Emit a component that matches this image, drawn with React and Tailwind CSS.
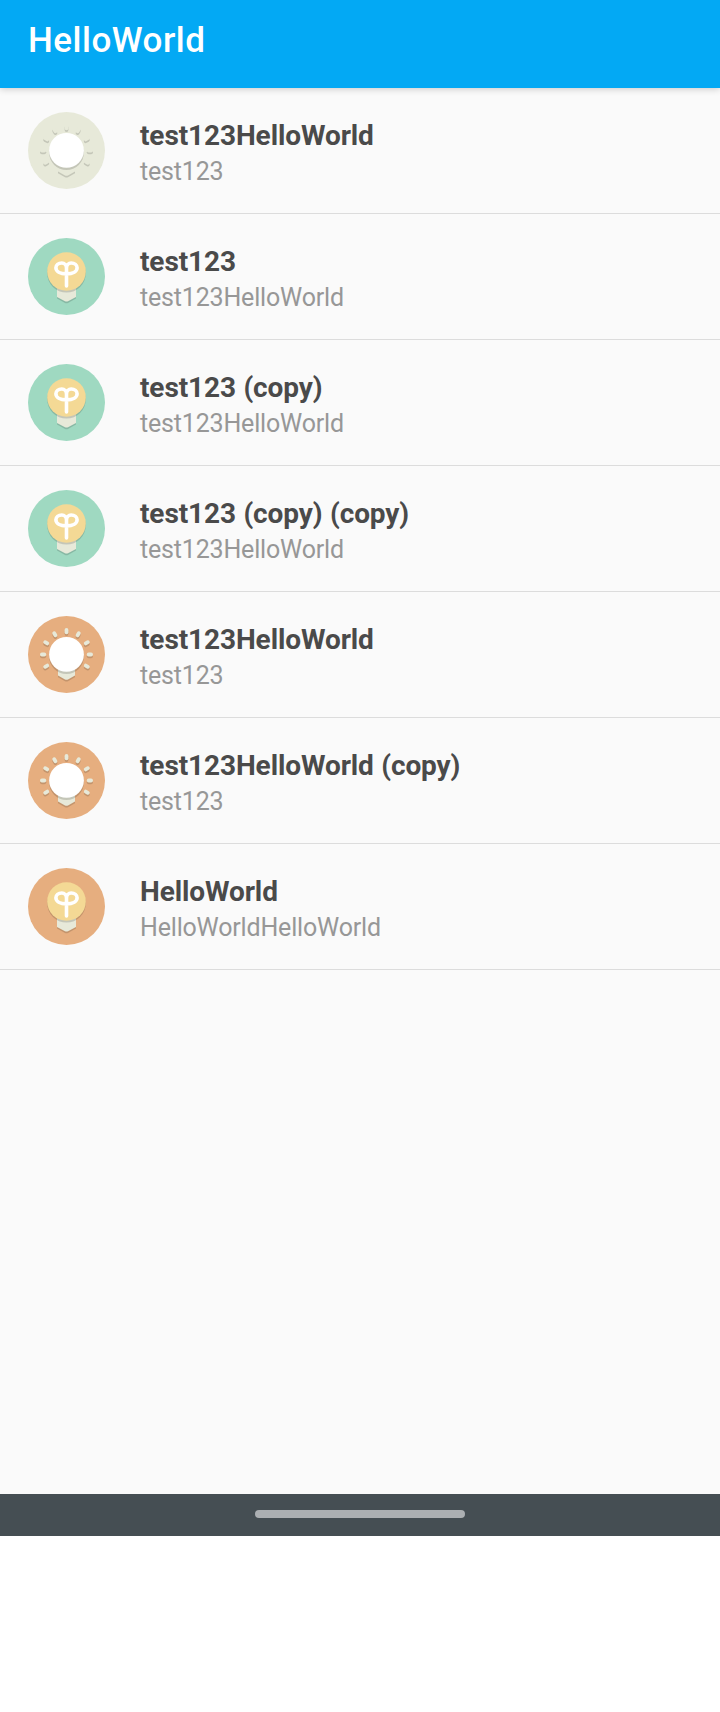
const RAYS = [-120, -90, -60, -30, 0, 30, 60, 90, 120];

const CREAM = "#e7e9d9";

function UnlitBulb({ background }) {
  return (
    <svg className="size-[77px] shrink-0" viewBox="0 0 77 77">
      <circle cx="38.5" cy="38.5" r="38.5" fill={background} />
      <g fill="#000" fillOpacity="0.15">
        {RAYS.map((a) => (
          <rect key={a} x="36.6" y="12" width="3.8" height="6.2" rx="1.9" transform={`translate(0 1.8) rotate(${a} 38.5 38.5)`} />
        ))}
        <path d="M30 50H47V61.2L40 65.2Q38.5 66 37 65.2L30 61.2Z" />
      </g>
      <g fill={CREAM}>
        {RAYS.map((a) => (
          <rect key={a} x="36.6" y="12" width="3.8" height="6.2" rx="1.9" transform={`rotate(${a} 38.5 38.5)`} />
        ))}
        <path d="M30 48H47V59.5L40 63.4Q38.5 64.2 37 63.4L30 59.5Z" />
      </g>
      <circle cx="38.5" cy="40.6" r="17.4" fill="#000" fillOpacity="0.15" />
      <circle cx="38.5" cy="38.4" r="17.4" fill="#fff" />
    </svg>
  );
}

function LitBulb({ background }) {
  return (
    <svg className="size-[77px] shrink-0" viewBox="0 0 77 77">
      <circle cx="38.5" cy="38.5" r="38.5" fill={background} />
      <path d="M29 50H48V60.6L40 64.9Q38.5 65.7 37 64.9L29 60.6Z" fill="#000" fillOpacity="0.15" />
      <path d="M29 48H48V59L40 63.2Q38.5 64 37 63.2L29 59Z" fill={CREAM} />
      <circle cx="38.5" cy="35.3" r="19.3" fill="#000" fillOpacity="0.15" />
      <circle cx="38.5" cy="33.5" r="19.3" fill="#f4d995" />
      <path
        d="M38.5 48V30C38.4 27 36.5 25 33.8 25C30.4 25 27.9 27.1 27.9 29.8C27.9 33.4 32 35.9 38.5 35.9C45 35.9 49.1 33.4 49.1 29.8C49.1 27.1 46.6 25 43.2 25C40.5 25 38.6 27 38.5 30"
        fill="none"
        stroke="#fff"
        strokeWidth="3.6"
        strokeLinecap="round"
        strokeLinejoin="round"
      />
    </svg>
  );
}

const ITEMS = [
  { title: "test123HelloWorld", subtitle: "test123", icon: <UnlitBulb background="#e7e9d9" /> },
  { title: "test123", subtitle: "test123HelloWorld", icon: <LitBulb background="#9fd9c1" /> },
  { title: "test123 (copy)", subtitle: "test123HelloWorld", icon: <LitBulb background="#9fd9c1" /> },
  { title: "test123 (copy) (copy)", subtitle: "test123HelloWorld", icon: <LitBulb background="#9fd9c1" /> },
  { title: "test123HelloWorld", subtitle: "test123", icon: <UnlitBulb background="#e6ae7f" /> },
  { title: "test123HelloWorld (copy)", subtitle: "test123", icon: <UnlitBulb background="#e6ae7f" /> },
  { title: "HelloWorld", subtitle: "HelloWorldHelloWorld", icon: <LitBulb background="#e6ae7f" /> },
];

export default function App() {
  return (
    <div className="flex h-[1712px] w-[720px] flex-col bg-white font-['Roboto',sans-serif]">
      <header className="z-10 flex h-[88px] shrink-0 items-start bg-[#03a9f4] px-7 pt-[21px] shadow-[0_1px_7px_rgba(0,0,0,0.2)]">
        <h1 className="text-[35px] leading-10 font-medium tracking-[0.5px] text-white">HelloWorld</h1>
      </header>
      <main className="h-[1406px] shrink-0 bg-[#fafafa]">
        <ul>
          {ITEMS.map((item, i) => (
            <li key={i} className="flex h-[126px] items-start gap-[35px] border-b border-[#dcdcdc] pt-6 pl-7">
              {item.icon}
              <div className="pt-2">
                <p className="text-[28px] leading-8 font-bold tracking-[-0.1px] text-[#4a4a4a] [word-spacing:0.6px]">{item.title}</p>
                <p className="mt-1 text-[25px] leading-8 tracking-[-0.18px] text-[#979797]">{item.subtitle}</p>
              </div>
            </li>
          ))}
        </ul>
      </main>
      <footer className="flex h-[42px] shrink-0 justify-center bg-[#454e53] pt-4">
        <div className="h-2 w-[210px] rounded-full bg-[#abafb2]" />
      </footer>
    </div>
  );
}
